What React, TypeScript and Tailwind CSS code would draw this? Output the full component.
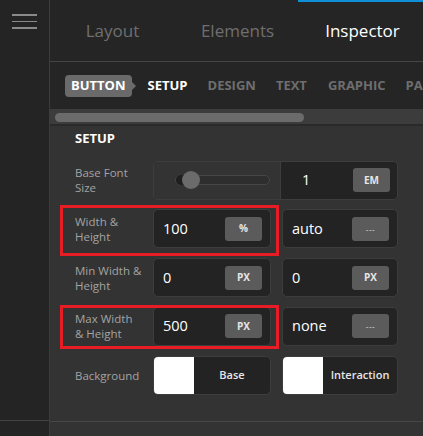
import React from "react";

const font = { fontFamily: '"Open Sans", "Noto Sans", sans-serif' };

function UnitButton({ label }: { label: string }) {
  const dash = label === "---";
  return (
    <div
      className={`flex h-[24px] w-[37px] items-center justify-center rounded-[3px] bg-[#5b5b5b] text-[#e6e6e6] ${
        dash ? "text-[8px] font-normal tracking-[0.6px]" : "text-[10px] font-bold"
      }`}
    >
      {label}
    </div>
  );
}

function ValueBox({ value, unit, w }: { value: string; unit: string; w: string }) {
  return (
    <div className={`flex h-[39px] ${w} items-center justify-between rounded-[5px] border border-[#3d3d3d] bg-[#232323] pl-[9px] pr-[8px]`}>
      <span className="text-[14.5px] text-white">{value}</span>
      <UnitButton label={unit} />
    </div>
  );
}

function ColorBox({ label, w }: { label: string; w: string }) {
  return (
    <div className={`flex h-[39px] ${w} items-stretch overflow-hidden rounded-[5px] border border-[#3d3d3d] bg-[#232323]`}>
      <div className="w-[40px] bg-white" />
      <div className="flex flex-1 items-center justify-center text-[11px] font-semibold text-[#e6e6e6]">
        {label}
      </div>
    </div>
  );
}

function Label({ children }: { children: React.ReactNode }) {
  return (
    <div className="w-[78px] shrink-0 text-[11.5px] leading-[15px] text-[#a3a3a3]">{children}</div>
  );
}

function Row({ label, children }: { label: React.ReactNode; children: React.ReactNode }) {
  return (
    <div className="flex h-[39px] items-center">
      <Label>{label}</Label>
      <div className="flex gap-[11px]">{children}</div>
    </div>
  );
}

export default function App() {
  return (
    <div className="flex h-[436px] w-[423px] overflow-hidden bg-[#333333]" style={font}>
      {/* side rail */}
      <div className="flex w-[50px] shrink-0 flex-col border-r border-[#3c3c3c] bg-[#242424]">
        <div className="flex flex-col gap-[5px] pl-[12px] pt-[14px]">
          <div className="h-[1.5px] w-[25px] bg-[#8a8a8a]" />
          <div className="h-[1.5px] w-[25px] bg-[#8a8a8a]" />
          <div className="h-[1.5px] w-[25px] bg-[#8a8a8a]" />
        </div>
        <div className="mt-auto mb-[15px] h-px bg-[#444444]" />
      </div>

      {/* main panel */}
      <div className="relative flex min-w-0 flex-1 flex-col">
        {/* top tabs */}
        <div className="flex h-[62px] shrink-0 border-b border-[#454545] bg-[#252525]">
          <div className="flex w-[125px] shrink-0 items-center justify-center text-[17px] text-[#6f6f6f]">Layout</div>
          <div className="flex w-[125px] shrink-0 items-center justify-center text-[17px] text-[#6f6f6f]">Elements</div>
          <div className="relative flex w-[125px] shrink-0 items-center justify-center text-[17px] text-white">
            <div className="absolute left-[-2px] right-0 top-0 h-[2px] bg-[#0e8fd8]" />
            Inspector
          </div>
        </div>

        {/* sub tabs */}
        <div className="flex h-[47px] shrink-0 items-center overflow-hidden whitespace-nowrap bg-[#252525] pl-[15px] text-[13px] font-bold">
          <div className="relative flex h-[22px] items-center rounded-[4px] bg-[#6a6a6a] px-[6px] text-white">
            BUTTON
            <div className="absolute right-[-4px] top-1/2 h-0 w-0 -translate-y-1/2 border-y-[4px] border-l-[4px] border-y-transparent border-l-[#6a6a6a]" />
          </div>
          <span className="ml-[16px] text-white">SETUP</span>
          <span className="ml-[20px] text-[#6e6e6e]">DESIGN</span>
          <span className="ml-[20px] text-[#6e6e6e]">TEXT</span>
          <span className="ml-[21px] text-[#6e6e6e]">GRAPHIC</span>
          <span className="ml-[20px] shrink-0 text-[#6e6e6e]">PAR</span>
        </div>

        {/* horizontal scrollbar */}
        <div className="flex h-[17px] shrink-0 items-center border-b-2 border-[#2a2a2a] bg-[#3c3c3c] pl-[5px] pt-[1px]">
          <div className="h-[9px] w-[249px] rounded-full bg-[#6b6b6b]" />
        </div>

        {/* setup section */}
        <div className="flex flex-1 flex-col border-b border-[#474747] pl-[25px]">
          <div className="mt-[3px] text-[13px] font-bold text-white">SETUP</div>

          <div className="mt-[12px] flex flex-col gap-[9.75px]">
            <Row label={<>Base Font<br />Size</>}>
              <div className="flex h-[39px] w-[245px] overflow-hidden rounded-[5px] border border-[#3d3d3d]">
                <div className="flex w-[127px] shrink-0 items-center border-r border-[#3d3d3d] bg-[#333333] pl-[21px]">
                  <div className="relative h-[10px] w-[95px] rounded-full border border-[#464646] bg-[#2e2e2e]">
                    <div className="absolute left-0 top-[-1px] h-[10px] w-[12px] rounded-l-full bg-[#1f1f1f]" />
                    <div className="absolute left-[6px] top-[-5px] h-[18px] w-[18px] rounded-full bg-[#6b6b6b]" />
                  </div>
                </div>
                <div className="flex flex-1 items-center justify-between bg-[#232323] pl-[21px] pr-[7px]">
                  <span className="text-[14.5px] text-white">1</span>
                  <UnitButton label="EM" />
                </div>
              </div>
            </Row>
            <Row label={<>Width &amp;<br />Height</>}>
              <ValueBox value="100" unit="%" w="w-[118px]" />
              <ValueBox value="auto" unit="---" w="w-[116px]" />
            </Row>
            <Row label={<>Min Width &amp;<br />Height</>}>
              <ValueBox value="0" unit="PX" w="w-[118px]" />
              <ValueBox value="0" unit="PX" w="w-[116px]" />
            </Row>
            <Row label={<>Max Width<br />&amp; Height</>}>
              <ValueBox value="500" unit="PX" w="w-[118px]" />
              <ValueBox value="none" unit="---" w="w-[116px]" />
            </Row>
            <Row label="Background">
              <ColorBox label="Base" w="w-[118px]" />
              <ColorBox label="Interaction" w="w-[116px]" />
            </Row>
          </div>
        </div>
        <div className="h-[14px] shrink-0" />

        {/* highlight frames */}
        <div className="pointer-events-none absolute left-[10px] top-[205px] h-[51px] w-[219px] border-[3px] border-[#e81c24]" />
        <div className="pointer-events-none absolute left-[10px] top-[305px] h-[44px] w-[219px] border-[3px] border-[#e81c24]" />
      </div>
    </div>
  );
}
